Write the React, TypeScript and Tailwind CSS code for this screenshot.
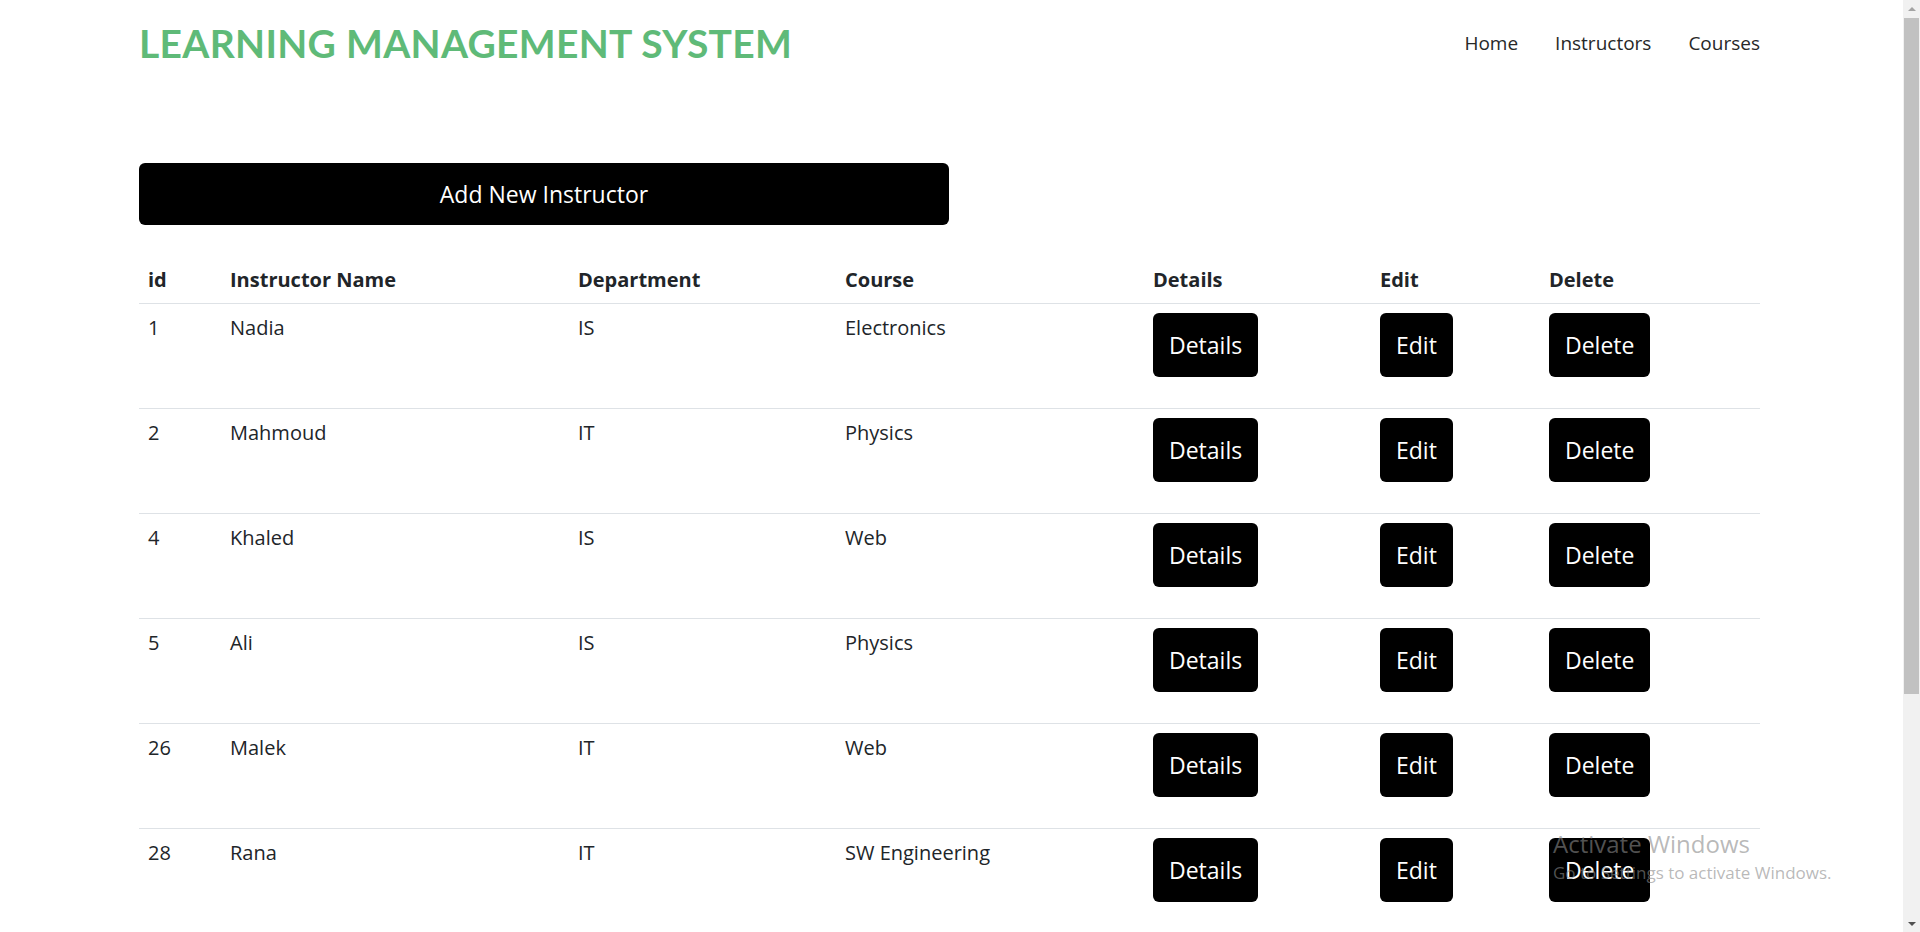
const instructors = [
  { id: 1, name: "Nadia", dept: "IS", course: "Electronics" },
  { id: 2, name: "Mahmoud", dept: "IT", course: "Physics" },
  { id: 4, name: "Khaled", dept: "IS", course: "Web" },
  { id: 5, name: "Ali", dept: "IS", course: "Physics" },
  { id: 26, name: "Malek", dept: "IT", course: "Web" },
  { id: 28, name: "Rana", dept: "IT", course: "SW Engineering" },
];

function ActionButton({ label }: { label: string }) {
  return (
    <button className="h-[64px] rounded-[6px] bg-black px-[16px] text-[23px] text-white">
      {label}
    </button>
  );
}

function Scrollbar() {
  return (
    <aside className="flex w-[17px] shrink-0 flex-col items-center bg-[#f1f1f1]">
      <div className="flex h-[17px] items-center justify-center">
        <div className="h-0 w-0 border-x-[4px] border-b-[4px] border-x-transparent border-b-[#a3a3a3]" />
      </div>
      <div className="mt-[1px] h-[676px] w-[15px] bg-[#c1c1c1]" />
      <div className="flex-1" />
      <div className="flex h-[17px] items-center justify-center">
        <div className="h-0 w-0 border-x-[4px] border-t-[4px] border-x-transparent border-t-[#505050]" />
      </div>
    </aside>
  );
}

export default function App() {
  return (
    <div className="flex h-[932px] w-full overflow-hidden bg-white font-['Open_Sans',sans-serif] text-[#212529]">
      <main className="relative flex-1 overflow-hidden">
        <div className="ml-[139px] w-[1621px]">
          <header className="flex h-[86px] items-center justify-between">
            <h1 className="font-['Lato',sans-serif] text-[39px] font-bold tracking-[0.3px] text-[#5fba78]">
              LEARNING MANAGEMENT SYSTEM
            </h1>
            <nav className="flex items-center gap-[37px] text-[19px] text-[#272828]">
              <a href="#">Home</a>
              <a href="#">Instructors</a>
              <a href="#">Courses</a>
            </nav>
          </header>

          <button className="mt-[77px] h-[62px] w-[810px] rounded-[6px] bg-black text-[23px] text-white">
            Add New Instructor
          </button>

          <table className="mt-[33px] w-full border-collapse text-left text-[20px]">
            <thead>
              <tr className="border-b border-[#dee2e6]">
                <th className="w-[82px] px-[9px] pb-[8px] pt-[7px] font-bold">id</th>
                <th className="w-[348px] px-[9px] pb-[8px] pt-[7px] font-bold">Instructor Name</th>
                <th className="w-[267px] px-[9px] pb-[8px] pt-[7px] font-bold">Department</th>
                <th className="w-[308px] px-[9px] pb-[8px] pt-[7px] font-bold">Course</th>
                <th className="w-[227px] px-[9px] pb-[8px] pt-[7px] font-bold">Details</th>
                <th className="w-[169px] px-[9px] pb-[8px] pt-[7px] font-bold">Edit</th>
                <th className="px-[9px] pb-[8px] pt-[7px] font-bold">Delete</th>
              </tr>
            </thead>
            <tbody>
              {instructors.map((i) => (
                <tr key={i.id} className="h-[105px] border-b border-[#dee2e6] align-top">
                  <td className="px-[9px] pt-[9px]">{i.id}</td>
                  <td className="px-[9px] pt-[9px]">{i.name}</td>
                  <td className="px-[9px] pt-[9px]">{i.dept}</td>
                  <td className="px-[9px] pt-[9px]">{i.course}</td>
                  <td className="px-[9px] pt-[9px]">
                    <ActionButton label="Details" />
                  </td>
                  <td className="px-[9px] pt-[9px]">
                    <ActionButton label="Edit" />
                  </td>
                  <td className="px-[9px] pt-[9px]">
                    <ActionButton label="Delete" />
                  </td>
                </tr>
              ))}
            </tbody>
          </table>
        </div>

        {/* OS watermark overlay */}
        <div className="pointer-events-none absolute left-[1553px] top-[827px] font-['Open_Sans',sans-serif] text-[#8a8a8a]/60">
          <div className="text-[24px] leading-[34px]">Activate Windows</div>
          <div className="text-[17px] leading-[24px]">Go to Settings to activate Windows.</div>
        </div>
      </main>
      <Scrollbar />
    </div>
  );
}
